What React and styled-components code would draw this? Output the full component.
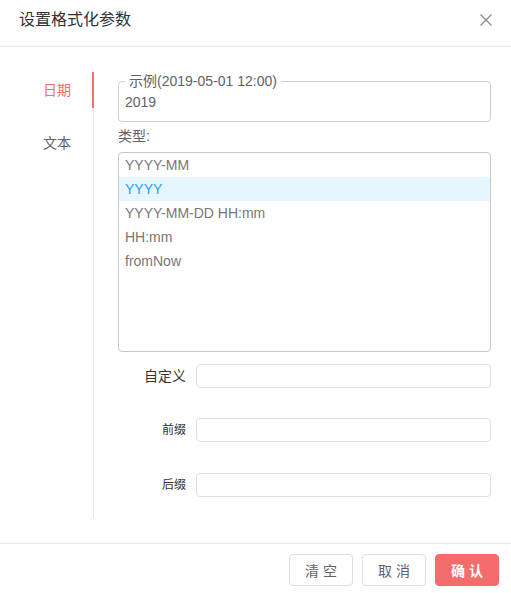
import React from "react";
import styled, { createGlobalStyle } from "styled-components";

const Global = createGlobalStyle`
  html, body { margin: 0; padding: 0; background: #fff; }
  body { font-family: "Liberation Sans", "Noto Sans CJK SC", sans-serif; font-size: 14px; color: #606266; }
  * { box-sizing: border-box; }
`;

const Dialog = styled.div`
  width: 511px;
  height: 593px;
  background: #fff;
  display: flex;
  flex-direction: column;
`;

const Header = styled.div`
  height: 48px;
  padding: 8px 19px 0 19px;
  border-bottom: 1px solid #e8e8e8;
  display: flex;
  justify-content: space-between;
  align-items: flex-start;
`;

const Title = styled.div`
  font-size: 16px;
  line-height: 24px;
  color: #303133;
`;

const Close = styled.button`
  border: none;
  background: none;
  padding: 0;
  margin: 6px 0 0 0;
  width: 12px;
  height: 12px;
  display: flex;
  cursor: pointer;
`;

const Body = styled.div`
  display: flex;
  padding: 24px 20px 25px 0;
  flex: 1;
`;

const Sidebar = styled.div`
  width: 94px;
  border-right: 1px solid #e4e7ed;
  display: flex;
  flex-direction: column;
  gap: 17px;
  padding-top: 1px;
`;

const Tab = styled.div`
  position: relative;
  height: 36px;
  line-height: 36px;
  text-align: right;
  padding-right: 22px;
  font-size: 14px;
  color: ${(p) => (p.$active ? "#f56c6c" : "#606266")};
  &::after {
    content: "";
    display: ${(p) => (p.$active ? "block" : "none")};
    position: absolute;
    right: -1px;
    top: 0;
    width: 2px;
    height: 100%;
    background: #f56c6c;
  }
`;

const Content = styled.div`
  flex: 1;
  padding: 0 0 21px 24px;
  display: flex;
  flex-direction: column;
`;

const Fieldset = styled.fieldset`
  margin: 0;
  border: 1px solid #cfcfcf;
  border-radius: 4px;
  padding: 0 6px 9px 6px;
  min-width: 0;
`;

const Legend = styled.legend`
  padding: 0 4px;
  font-size: 14px;
  line-height: 21px;
  color: #606266;
`;

const Sample = styled.div`
  line-height: 20px;
  font-size: 14px;
  color: #606266;
`;

const FieldLabel = styled.div`
  margin: 4px 0 6px;
  line-height: 20px;
  font-size: 14px;
  color: #606266;
`;

const ListBox = styled.div`
  height: 200px;
  border: 1px solid #c8c8c8;
  border-radius: 4px;
  overflow: hidden;
`;

const Option = styled.div`
  height: 24px;
  line-height: 24px;
  padding-left: 6px;
  font-size: 14px;
  color: ${(p) => (p.$selected ? "#1e9fff" : "#777")};
  background: ${(p) => (p.$selected ? "#e6f6fe" : "transparent")};
`;

const Row = styled.div`
  display: flex;
  align-items: center;
  margin-top: ${(p) => p.$top}px;
  gap: 10px;
`;

const RowLabel = styled.label`
  width: 68px;
  text-align: right;
  font-size: ${(p) => p.$size}px;
  color: #333;
  line-height: 20px;
`;

const Input = styled.input`
  flex: 1;
  height: 24px;
  border: 1px solid #dcdfe6;
  border-radius: 4px;
  outline: none;
  padding: 0 6px;
  font-family: inherit;
  font-size: 13px;
`;

const Footer = styled.div`
  border-top: 1px solid #e8e8e8;
  padding: 10px 12px 7px;
  display: flex;
  justify-content: flex-end;
  gap: 9px;
`;

const Button = styled.button`
  width: 64px;
  height: 32px;
  border-radius: 4px;
  font-family: "Liberation Sans", "Noto Sans CJK SC", sans-serif;
  font-size: 14px;
  letter-spacing: 4px;
  text-indent: 4px;
  cursor: pointer;
  border: 1px solid ${(p) => (p.$primary ? "#f56c6c" : "#dcdfe6")};
  background: ${(p) => (p.$primary ? "#f56c6c" : "#fff")};
  color: ${(p) => (p.$primary ? "#fff" : "#606266")};
  font-weight: ${(p) => (p.$primary ? 700 : 400)};
`;

const options = ["YYYY-MM", "YYYY", "YYYY-MM-DD HH:mm", "HH:mm", "fromNow"];

export default function App() {
  return (
    <Dialog>
      <Global />
      <Header>
        <Title>设置格式化参数</Title>
        <Close aria-label="close">
          <svg width="12" height="12" viewBox="0 0 12 12">
            <path d="M0.5 0.5 L11.5 11.5 M11.5 0.5 L0.5 11.5" stroke="#8c8c8c" strokeWidth="1.4" fill="none" />
          </svg>
        </Close>
      </Header>
      <Body>
        <Sidebar>
          <Tab $active>日期</Tab>
          <Tab>文本</Tab>
        </Sidebar>
        <Content>
          <Fieldset>
            <Legend>示例(2019-05-01 12:00)</Legend>
            <Sample>2019</Sample>
          </Fieldset>
          <FieldLabel>类型:</FieldLabel>
          <ListBox>
            {options.map((o) => (
              <Option key={o} $selected={o === "YYYY"}>{o}</Option>
            ))}
          </ListBox>
          <Row $top={12}>
            <RowLabel $size={14}>自定义</RowLabel>
            <Input />
          </Row>
          <Row $top={30}>
            <RowLabel $size={12}>前缀</RowLabel>
            <Input />
          </Row>
          <Row $top={31}>
            <RowLabel $size={12}>后缀</RowLabel>
            <Input />
          </Row>
        </Content>
      </Body>
      <Footer>
        <Button>清空</Button>
        <Button>取消</Button>
        <Button $primary>确认</Button>
      </Footer>
    </Dialog>
  );
}
